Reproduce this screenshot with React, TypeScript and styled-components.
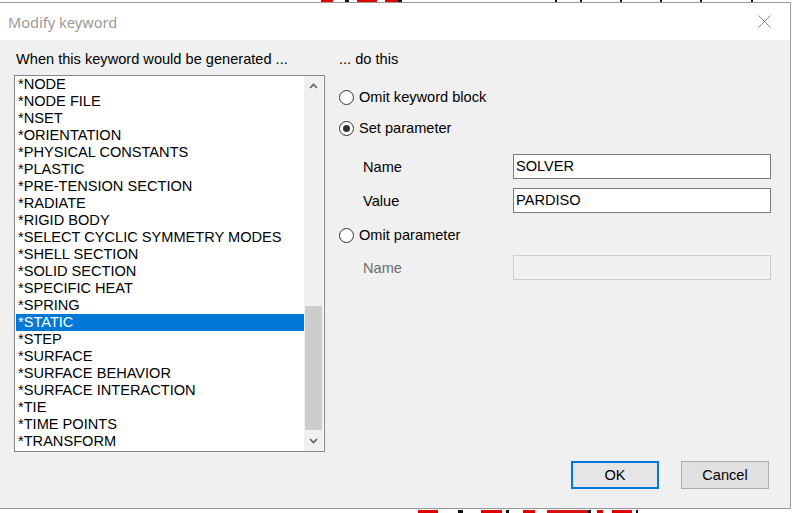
import React, { useState } from "react";
import styled, { createGlobalStyle } from "styled-components";

const GlobalStyle = createGlobalStyle`
  html, body {
    margin: 0;
    padding: 0;
    background: #ffffff;
    font-family: "Liberation Sans", Arial, sans-serif;
  }
`;

const keywords = [
  "*NODE",
  "*NODE FILE",
  "*NSET",
  "*ORIENTATION",
  "*PHYSICAL CONSTANTS",
  "*PLASTIC",
  "*PRE-TENSION SECTION",
  "*RADIATE",
  "*RIGID BODY",
  "*SELECT CYCLIC SYMMETRY MODES",
  "*SHELL SECTION",
  "*SOLID SECTION",
  "*SPECIFIC HEAT",
  "*SPRING",
  "*STATIC",
  "*STEP",
  "*SURFACE",
  "*SURFACE BEHAVIOR",
  "*SURFACE INTERACTION",
  "*TIE",
  "*TIME POINTS",
  "*TRANSFORM",
];

// bits of the drawing behind the dialog that peek out above and below it
const backdropMarks = [
  { x: 321, y: 0, w: 12, h: 2, c: "#e00000" },
  { x: 345, y: 0, w: 4, h: 2, c: "#111" },
  { x: 357, y: 0, w: 20, h: 2, c: "#e00000" },
  { x: 385, y: 0, w: 13, h: 2, c: "#e00000" },
  { x: 398, y: 0, w: 4, h: 2, c: "#111" },
  { x: 555, y: 0, w: 2, h: 2, c: "#111" },
  { x: 580, y: 0, w: 2, h: 2, c: "#111" },
  { x: 620, y: 0, w: 2, h: 2, c: "#111" },
  { x: 660, y: 0, w: 2, h: 2, c: "#111" },
  { x: 700, y: 0, w: 2, h: 2, c: "#111" },
  { x: 751, y: 0, w: 2, h: 2, c: "#111" },
  { x: 418, y: 510, w: 20, h: 3, c: "#e00000" },
  { x: 458, y: 510, w: 5, h: 3, c: "#111" },
  { x: 481, y: 510, w: 21, h: 3, c: "#e00000" },
  { x: 506, y: 510, w: 3, h: 3, c: "#111" },
  { x: 523, y: 510, w: 12, h: 3, c: "#e00000" },
  { x: 547, y: 510, w: 41, h: 3, c: "#d81010" },
  { x: 588, y: 510, w: 3, h: 3, c: "#111" },
  { x: 597, y: 510, w: 6, h: 3, c: "#e00000" },
  { x: 612, y: 510, w: 20, h: 3, c: "#e00000" },
  { x: 636, y: 510, w: 2, h: 3, c: "#111" },
];

const Screen = styled.div`
  position: relative;
  width: 792px;
  height: 513px;
  overflow: hidden;
  background: #ffffff;
`;

const Mark = styled.span`
  position: absolute;
  display: block;
`;

const Window = styled.div`
  position: relative;
  margin-top: 2px;
  width: 791px;
  border-top: 1px solid #9a9a9a;
  border-right: 1px solid #9a9a9a;
  border-bottom: 1px solid #9a9a9a;
  box-sizing: border-box;
  display: flex;
  flex-direction: column;
  background: #f0f0f0;
`;

const TitleBar = styled.div`
  height: 37px;
  background: #ffffff;
  display: flex;
  align-items: center;
  justify-content: space-between;
  padding: 0 8px 0 8px;
`;

const Title = styled.span`
  font-family: "Noto Sans", "Open Sans", sans-serif;
  font-size: 14.6px;
  color: #9a9a9a;
  margin-top: 1px;
`;

const CloseButton = styled.button`
  width: 30px;
  height: 30px;
  border: none;
  background: transparent;
  padding: 0;
  display: flex;
  align-items: center;
  justify-content: center;
  margin-right: 3px;
`;

const Body = styled.div`
  height: 468px;
  box-sizing: border-box;
  padding: 9px 21px 19px 14px;
  display: flex;
  flex-direction: column;
`;

const Columns = styled.div`
  display: flex;
  gap: 12px;
`;

const LeftColumn = styled.div`
  width: 311px;
  flex-shrink: 0;
  display: flex;
  flex-direction: column;
`;

const RightColumn = styled.div`
  flex: 1;
  display: flex;
  flex-direction: column;
`;

const Heading = styled.div`
  height: 26px;
  line-height: 20px;
  font-size: 14.6px;
  color: #000;
  padding-left: 2px;
`;

const ListBox = styled.div`
  height: 377px;
  border: 1px solid #828790;
  box-sizing: border-box;
  background: #ffffff;
  display: flex;
`;

const Items = styled.div`
  flex: 1;
  padding-left: 1px;
  overflow: hidden;
`;

const Item = styled.div<{ $selected?: boolean }>`
  height: 17px;
  line-height: 17px;
  font-size: 14.6px;
  padding-left: 2px;
  white-space: nowrap;
  color: ${(p) => (p.$selected ? "#ffffff" : "#000000")};
  background: ${(p) => (p.$selected ? "#0078d7" : "transparent")};
`;

const ScrollBar = styled.div`
  width: 19px;
  background: #f0f0f0;
  display: flex;
  flex-direction: column;
  margin-right: 1px;
`;

const ScrollArrow = styled.div`
  height: 20px;
  display: flex;
  align-items: center;
  justify-content: center;
`;

const Track = styled.div`
  flex: 1;
  display: flex;
  flex-direction: column;
  justify-content: flex-end;
  padding: 0 1px;
`;

const Thumb = styled.div`
  height: 124px;
  background: #cdcdcd;
  margin-bottom: 1px;
`;

const RadioRow = styled.label<{ $top: number }>`
  display: flex;
  align-items: center;
  height: 22px;
  margin-top: ${(p) => p.$top}px;
  font-size: 14.6px;
  color: #000;
  gap: 5px;
  padding-left: 2px;
`;

const RadioCircle = styled.span<{ $checked?: boolean }>`
  width: 15px;
  height: 15px;
  box-sizing: border-box;
  border-radius: 50%;
  border: 1px solid #333333;
  background: #ffffff;
  display: flex;
  align-items: center;
  justify-content: center;

  &::after {
    content: "";
    width: 7px;
    height: 7px;
    border-radius: 50%;
    background: #333333;
    display: ${(p) => (p.$checked ? "block" : "none")};
  }
`;

const FieldRow = styled.div<{ $top: number }>`
  display: flex;
  align-items: center;
  height: 25px;
  margin-top: ${(p) => p.$top}px;
  padding-left: 26px;
`;

const FieldLabel = styled.span<{ $disabled?: boolean }>`
  width: 150px;
  font-size: 14.6px;
  color: ${(p) => (p.$disabled ? "#6d6d6d" : "#000")};
`;

const TextBox = styled.div<{ $disabled?: boolean }>`
  width: 258px;
  height: 25px;
  box-sizing: border-box;
  border: 1px solid ${(p) => (p.$disabled ? "#cccccc" : "#7a7a7a")};
  background: ${(p) => (p.$disabled ? "#f0f0f0" : "#ffffff")};
  font-size: 14.6px;
  line-height: 23px;
  padding-left: 2px;
  color: #000;
`;

const Footer = styled.div`
  margin-top: auto;
  display: flex;
  justify-content: flex-end;
  gap: 22px;
`;

const Button = styled.button<{ $default?: boolean }>`
  width: 88px;
  height: 28px;
  box-sizing: border-box;
  font-family: "Liberation Sans", Arial, sans-serif;
  font-size: 14.6px;
  color: #000;
  background: ${(p) => (p.$default ? "#e5e5e5" : "#e1e1e1")};
  border: ${(p) => (p.$default ? "2px solid #0078d7" : "1px solid #adadad")};
  padding: 0;
`;

const Chevron = ({ up }: { up?: boolean }) => (
  <svg width="9" height="6" viewBox="0 0 9 6">
    <path
      d={up ? "M1 5 L4.5 1.5 L8 5" : "M1 1 L4.5 4.5 L8 1"}
      fill="none"
      stroke="#606060"
      strokeWidth="1.6"
    />
  </svg>
);

export default function App() {
  const [selected] = useState("*STATIC");
  const [mode, setMode] = useState<"omitBlock" | "set" | "omitParam">("set");

  return (
    <Screen>
      <GlobalStyle />
      {backdropMarks.map((m, i) => (
        <Mark
          key={i}
          style={{ left: m.x, top: m.y, width: m.w, height: m.h, background: m.c }}
        />
      ))}
      <Window>
        <TitleBar>
          <Title>Modify keyword</Title>
          <CloseButton aria-label="Close">
            <svg width="13" height="13" viewBox="0 0 13 13">
              <path d="M0.5 0.5 L12.5 12.5 M12.5 0.5 L0.5 12.5" stroke="#8a8a8a" strokeWidth="1" />
            </svg>
          </CloseButton>
        </TitleBar>
        <Body>
          <Columns>
            <LeftColumn>
              <Heading>When this keyword would be generated ...</Heading>
              <ListBox>
                <Items>
                  {keywords.map((k) => (
                    <Item key={k} $selected={k === selected}>
                      {k}
                    </Item>
                  ))}
                </Items>
                <ScrollBar>
                  <ScrollArrow>
                    <Chevron up />
                  </ScrollArrow>
                  <Track>
                    <Thumb />
                  </Track>
                  <ScrollArrow>
                    <Chevron />
                  </ScrollArrow>
                </ScrollBar>
              </ListBox>
            </LeftColumn>
            <RightColumn>
              <Heading>... do this</Heading>
              <RadioRow $top={11} onClick={() => setMode("omitBlock")}>
                <RadioCircle $checked={mode === "omitBlock"} />
                Omit keyword block
              </RadioRow>
              <RadioRow $top={9} onClick={() => setMode("set")}>
                <RadioCircle $checked={mode === "set"} />
                Set parameter
              </RadioRow>
              <FieldRow $top={15}>
                <FieldLabel>Name</FieldLabel>
                <TextBox>SOLVER</TextBox>
              </FieldRow>
              <FieldRow $top={9}>
                <FieldLabel>Value</FieldLabel>
                <TextBox>PARDISO</TextBox>
              </FieldRow>
              <RadioRow $top={11} onClick={() => setMode("omitParam")}>
                <RadioCircle $checked={mode === "omitParam"} />
                Omit parameter
              </RadioRow>
              <FieldRow $top={9}>
                <FieldLabel $disabled>Name</FieldLabel>
                <TextBox $disabled />
              </FieldRow>
            </RightColumn>
          </Columns>
          <Footer>
            <Button $default>OK</Button>
            <Button>Cancel</Button>
          </Footer>
        </Body>
      </Window>
    </Screen>
  );
}
